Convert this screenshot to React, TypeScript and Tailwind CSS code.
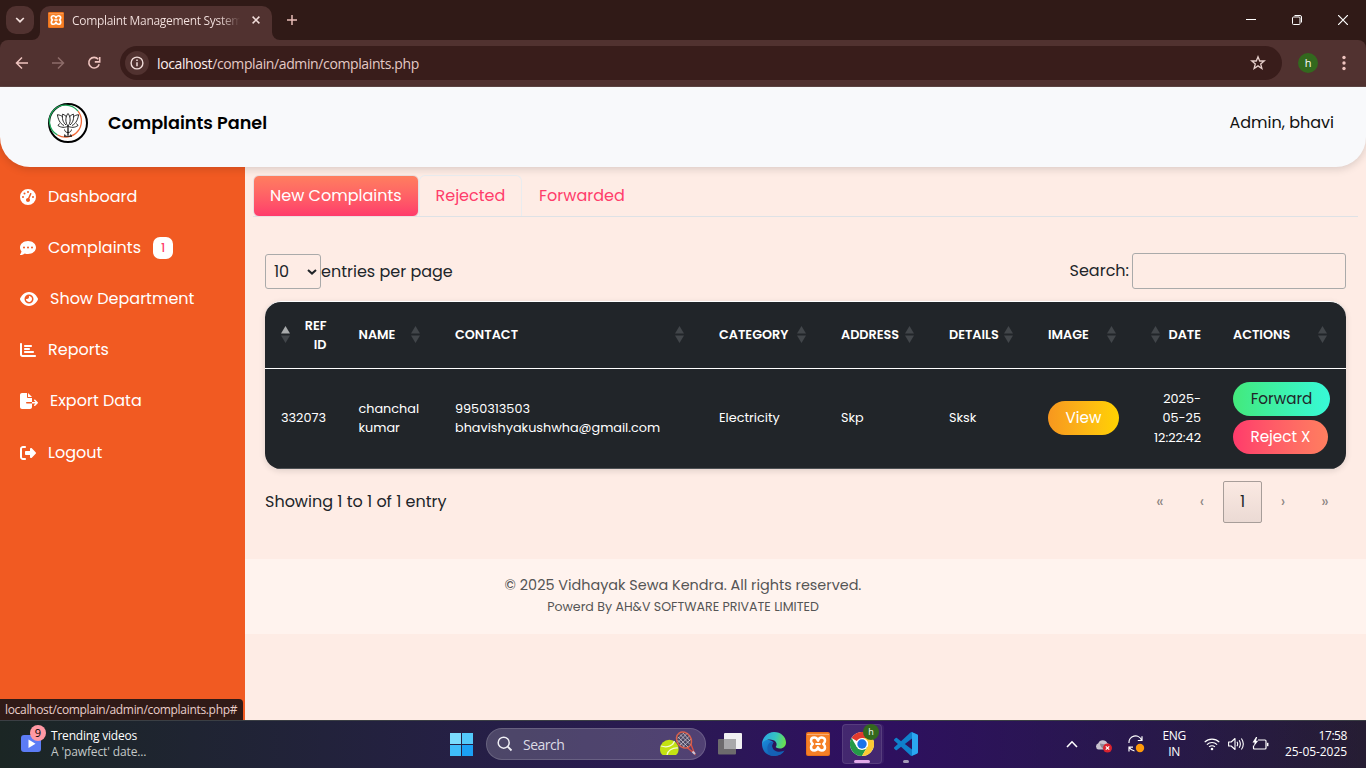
import React from "react";
import {
  FaChartBar,
  FaCommentDots,
  FaEye,
  FaFileExport,
  FaGaugeHigh,
  FaRightFromBracket,
} from "react-icons/fa6";

/* ---------- Shared drawings ---------- */

function XamppIcon({ className }: { className: string }) {
  return (
    <svg viewBox="0 0 24 24" className={className}>
      <rect width="24" height="24" rx="2" fill="#e8701c" />
      <rect x="1" y="1" width="22" height="22" rx="1.5" fill="#f57f26" />
      <path d="M1 2.5h22" stroke="#f9ab72" strokeWidth="1" />
      <path
        d="M12 8.6C11.2 6 9.8 5.600 8.2 5.600C5.600 5.600 5 7.3 5 8.8C5 10.800 6.400 11.2 6.800 12C6.400 12.8 5 13.2 5 15.2C5 16.7 5.600 18.400 8.2 18.400C9.800 18.400 11.2 18 12 15.4C12.800 18 14.2 18.400 15.8 18.400C18.400 18.400 19 16.7 19 15.2C19 13.2 17.6 12.8 17.2 12C17.6 11.2 19 10.800 19 8.8C19 7.3 18.400 5.600 15.8 5.600C14.2 5.600 12.8 6 12 8.6Z"
        fill="none"
        stroke="#fff"
        strokeWidth="2.5"
        strokeLinejoin="round"
      />
      <path d="M10.200 12h3.600" stroke="#fff" strokeWidth="2.2" strokeLinecap="round" />
    </svg>
  );
}

function LotusLogo() {
  return (
    <svg viewBox="0 0 40 40" className="h-10 w-10">
      <circle cx="20" cy="20" r="19" fill="#fff" stroke="#000" strokeWidth="2" />
      <path d="M30 8.200A16 16 0 1 0 9.500 32" fill="none" stroke="#1fa65a" strokeWidth="1.300" />
      <path d="M30 8.200A16 16 0 0 1 9.500 32" fill="none" stroke="#f26b3a" strokeWidth="1.300" />
      <g fill="none" stroke="#111" strokeWidth="0.900" strokeLinejoin="round">
        <path d="M20 23C17.300 20 17 14 20 10.500C23 14 22.700 20 20 23Z" />
        <path d="M18 22C14.500 19 14 15 14.600 11.200C16.800 12 18 13 18.600 14" />
        <path d="M22 22C25.500 19 26 15 25.400 11.200C23.200 12 22 13 21.400 14" />
        <path d="M16 22.500C11.500 20.500 10 15.500 9.400 11.700C11.800 12 13.600 12.800 14.400 13.600" />
        <path d="M24 22.500C28.500 20.500 30 15.500 30.600 11.700C28.200 12 26.400 12.800 25.600 13.600" />
        <path d="M11.500 20.500L10 22.500C13 24.800 17 24.800 20 23.200C23 24.800 27 24.800 30 22.500L28.500 20.500" />
        <path d="M20 23.500v9" strokeWidth="1.300" />
        <path d="M20 29.500C17.500 29.500 16.800 28 16.500 26.500M20 29.500C22.500 29.500 23.200 28 23.500 26.500" />
        <path d="M16 33.200h8M16.500 31.500l1 2M22.500 31.500l1 2" strokeWidth="1.100" />
      </g>
    </svg>
  );
}

/* ---------- Browser chrome ---------- */

function TabStrip() {
  return (
    <div className="flex h-10 shrink-0 items-end bg-[#301a17]">
      <div className="mb-[6px] ml-[6px] flex h-7 w-7 items-center justify-center rounded-[10px] bg-[#513230]">
        <svg viewBox="0 0 10 6" className="h-[6px] w-[10px]">
          <path d="M1.200 1L5 4.700L8.800 1" fill="none" stroke="#f2dedb" strokeWidth="1.700" />
        </svg>
      </div>
      <svg viewBox="0 0 8 8" className="-ml-[2px] h-2 w-2">
        <path d="M8 0v8H0A8 8 0 0 0 8 0Z" fill="#513230" />
      </svg>
      <div className="flex h-[34px] w-[232px] items-center rounded-t-[10px] bg-[#513230] pl-2">
        <XamppIcon className="-mt-[6px] h-4 w-4 shrink-0" />
        <div className="-mt-[4px] ml-2 w-[168px] overflow-hidden whitespace-nowrap bg-linear-to-r from-[#f6e4e1] from-88% to-transparent bg-clip-text text-[12px] tracking-[-0.31px] text-transparent">
          Complaint Management System
        </div>
        <svg viewBox="0 0 8 8" className="-mt-[6px] ml-[12px] h-2 w-2 shrink-0">
          <path d="M.6.6l6.800 6.800M7.400.6L.6 7.400" stroke="#f2dedb" strokeWidth="1.500" />
        </svg>
      </div>
      <svg viewBox="0 0 8 8" className="h-2 w-2">
        <path d="M0 0v8h8A8 8 0 0 1 0 0Z" fill="#513230" />
      </svg>
      <svg viewBox="0 0 10 10" className="mb-[15px] ml-[7px] h-[10px] w-[10px]">
        <path d="M5 0v10M0 5h10" stroke="#e8bdb8" strokeWidth="1.500" />
      </svg>
      <div className="mb-[15px] ml-auto mr-[18px] flex items-center gap-9">
        <svg viewBox="0 0 10 10" className="h-[10px] w-[10px]">
          <path d="M0 4.500h10" stroke="#fff" />
        </svg>
        <svg viewBox="0 0 10 10" className="h-[10px] w-[10px] overflow-visible">
          <rect x=".5" y="2" width="7.500" height="7.500" rx="1" fill="none" stroke="#fff" />
          <path d="M2.500.5h5.500a1.500 1.500 0 0 1 1.500 1.500v5.500" fill="none" stroke="#fff" />
        </svg>
        <svg viewBox="0 0 10 10" className="h-[10px] w-[10px]">
          <path d="M0 0l10 10M10 0L0 10" stroke="#fff" strokeWidth="1.200" />
        </svg>
      </div>
    </div>
  );
}

function Toolbar() {
  return (
    <div className="shrink-0 bg-[#301a17]">
      <div className="flex h-[47px] items-center rounded-t-lg border-b border-[#5f4644] bg-[#513230] pl-[15px] pr-[14px]">
        <svg viewBox="0 0 14 14" className="h-[14px] w-[14px]">
          <path d="M13 7H2M7 1.500L1.500 7L7 12.500" fill="none" stroke="#efc4bf" strokeWidth="1.500" />
        </svg>
        <svg viewBox="0 0 14 14" className="ml-[22px] h-[14px] w-[14px]">
          <path d="M1 7h11M7 1.500L12.500 7L7 12.500" fill="none" stroke="#8d6c69" strokeWidth="1.500" />
        </svg>
        <svg viewBox="0 0 14 14" className="ml-[22px] h-[14px] w-[14px]">
          <path d="M11.200 3.300A5.300 5.300 0 1 0 12.200 8.300" fill="none" stroke="#efc4bf" strokeWidth="1.600" />
          <path d="M12.700 1v4.900H7.800" fill="none" stroke="#efc4bf" strokeWidth="1.600" />
        </svg>
        <div className="ml-[19px] flex h-[34px] w-[1162px] items-center rounded-full bg-[#391d1b] pl-[5px] pr-4">
          <div className="flex h-6 w-6 items-center justify-center rounded-full bg-[#513230]">
            <svg viewBox="0 0 14 14" className="h-[14px] w-[14px]">
              <circle cx="7" cy="7" r="5.900" fill="none" stroke="#f0dcd9" strokeWidth="1.400" />
              <path d="M7 6.200v4M7 3.500v1.500" stroke="#f0dcd9" strokeWidth="1.500" />
            </svg>
          </div>
          <div className="ml-[8px] text-[14px] tracking-[-0.38px] text-[#e4c9c5]">
            <span className="text-[#fbeeec]">localhost</span>/complain/admin/complaints.php
          </div>
          <svg viewBox="0 0 16 16" className="ml-auto h-4 w-4">
            <path
              d="M8 1.800L9.700 6H14.200L10.700 8.900L11.900 13.500L8 10.900L4.100 13.500L5.300 8.900L1.800 6H6.300Z"
              fill="none"
              stroke="#e6cfcb"
              strokeWidth="1.300"
            />
          </svg>
        </div>
        <div className="ml-4 flex h-5 w-5 items-center justify-center rounded-full bg-[#33691e] text-[11px] text-white">
          h
        </div>
        <svg viewBox="0 0 16 16" className="ml-auto h-4 w-4">
          <g fill="#efc4bf">
            <circle cx="8" cy="2.500" r="1.700" />
            <circle cx="8" cy="8" r="1.700" />
            <circle cx="8" cy="13.500" r="1.700" />
          </g>
        </svg>
      </div>
    </div>
  );
}

/* ---------- Page ---------- */

function PageHeader() {
  return (
    <header className="relative z-10 flex h-20 shrink-0 items-start rounded-b-[30px] bg-[#f8f9fb] pl-12 pr-8 pt-4 shadow-[0_2px_8px_rgba(0,0,0,0.15)]">
      <LotusLogo />
      <h1 className="ml-5 mt-[6px] text-[17.6px] leading-7 font-semibold text-black">Complaints Panel</h1>
      <div className="ml-auto mt-2 text-base leading-6 text-[#111]">Admin, bhavi</div>
    </header>
  );
}

function Sidebar() {
  const row = "flex h-[51.2px] items-center pl-5";
  return (
    <aside className="w-[245px] shrink-0 bg-[#f15a22] pt-[34px] text-base text-white">
      <div className={row}>
        <FaGaugeHigh className="mr-3 h-4 w-4" />
        <span>Dashboard</span>
      </div>
      <div className={row}>
        <FaCommentDots className="mr-3 h-4 w-4" />
        <span>Complaints</span>
        <span className="ml-3 flex h-[22px] w-5 items-center justify-center rounded-[7px] bg-white text-[12px] font-medium text-[#ff3d6b]">
          1
        </span>
      </div>
      <div className={row}>
        <FaEye className="mr-3 h-4 w-[18px]" />
        <span>Show Department</span>
      </div>
      <div className={row}>
        <FaChartBar className="mr-3 h-4 w-4" />
        <span>Reports</span>
      </div>
      <div className={row}>
        <FaFileExport className="mr-3 h-4 w-[18px]" />
        <span>Export Data</span>
      </div>
      <div className={row}>
        <FaRightFromBracket className="mr-3 h-4 w-4" />
        <span>Logout</span>
      </div>
    </aside>
  );
}

function Tabs() {
  return (
    <nav className="mx-2 flex h-[42px] items-start border-b border-[#dee2e6] text-base text-[#ff3d6b]">
      <div className="flex h-[42px] w-[166px] shrink-0 items-center rounded-md border border-[#eadfe0] bg-linear-to-b from-[#ff7e5f] to-[#ff3a6b] pl-4 whitespace-nowrap text-white">
        New Complaints
      </div>
      <div className="flex h-[41px] w-[103px] items-center rounded-t-md border border-b-0 border-[#e9ecef] pl-[15.5px]">
        Rejected
      </div>
      <div className="flex h-[41px] items-center pl-[17px]">Forwarded</div>
    </nav>
  );
}

function SortArrows({ ascending = false }: { ascending?: boolean }) {
  return (
    <svg viewBox="0 0 9 17" className="h-[17px] w-[9px] shrink-0">
      <path d="M4.500 0L9 7.500H0Z" fill={ascending ? "#a9abac" : "#42464a"} />
      <path d="M4.500 17L9 9.500H0Z" fill="#42464a" />
    </svg>
  );
}

const columns = [
  { label: "NAME", width: "w-[96.5px]" },
  { label: "CONTACT", width: "w-[264px]" },
  { label: "CATEGORY", width: "w-[122px]" },
  { label: "ADDRESS", width: "w-[108px]" },
  { label: "DETAILS", width: "w-[99px]" },
  { label: "IMAGE", width: "w-[103px]" },
];

function ComplaintsTable() {
  return (
    <div className="mt-3 overflow-hidden rounded-2xl border-t border-white bg-[#212529] shadow-[0_2px_6px_rgba(0,0,0,0.12)]">
      <table className="w-full table-fixed border-collapse text-[12.8px] leading-[19.2px] text-white">
        <thead>
          <tr className="h-[66px] border-b border-white text-left">
            <th className="w-[77.5px] p-0">
              <div className="flex items-center justify-between px-4 text-right font-semibold">
                <SortArrows ascending />
                <span className="w-7">REF ID</span>
              </div>
            </th>
            {columns.map((c) => (
              <th key={c.label} className={`${c.width} p-0`}>
                <div className="flex items-center justify-between pl-4 pr-[19px] font-semibold">
                  {c.label}
                  <SortArrows />
                </div>
              </th>
            ))}
            <th className="w-[82px] p-0">
              <div className="flex items-center justify-between px-4 font-semibold">
                <SortArrows />
                DATE
              </div>
            </th>
            <th className="w-[129px] p-0">
              <div className="flex items-center justify-between pl-4 pr-[19px] font-semibold">
                ACTIONS
                <SortArrows />
              </div>
            </th>
          </tr>
        </thead>
        <tbody>
          <tr className="h-[100px] border-b border-[#4d5154]">
            <td className="py-0 pl-4 pr-0">332073</td>
            <td className="py-0 pl-4 pr-0">
              chanchal
              <br />
              kumar
            </td>
            <td className="py-0 pl-4 pr-0">
              9950313503
              <br />
              bhavishyakushwha@gmail.com
            </td>
            <td className="py-0 pl-4 pr-0">Electricity</td>
            <td className="py-0 pl-4 pr-0">Skp</td>
            <td className="py-0 pl-4 pr-0">Sksk</td>
            <td className="py-0 pl-4 pr-0">
              <button className="flex h-[34px] w-[71px] items-center justify-center rounded-full bg-linear-to-r from-[#f7971e] to-[#ffd200] text-[15.2px]">
                View
              </button>
            </td>
            <td className="py-0 pl-0 pr-4 text-right">
              2025-
              <br />
              05-25
              <br />
              12:22:42
            </td>
            <td className="py-0 pl-4 pr-0">
              <div className="flex flex-col gap-1 text-[15.2px]">
                <button className="flex h-[34px] w-[97px] items-center justify-center rounded-full bg-linear-to-r from-[#43e97b] to-[#38f9d7] text-[#212529]">
                  Forward
                </button>
                <button className="flex h-[34px] w-[95px] items-center justify-center rounded-full bg-linear-to-r from-[#ff3a6b] to-[#ff7e5f]">
                  Reject X
                </button>
              </div>
            </td>
          </tr>
        </tbody>
      </table>
    </div>
  );
}

function Content() {
  return (
    <main className="flex flex-1 flex-col bg-[#feece5] pt-[38px] text-base text-[#212529]">
      <Tabs />
      <section className="ml-5 mr-5 mt-9 h-[306px]">
        <div className="flex h-9 items-center">
          <div className="mt-px flex h-[35px] w-14 items-center justify-between rounded-[3px] border border-[#aaa] pl-2 pr-[3px]">
            <span>10</span>
            <svg viewBox="0 0 10 6" className="h-[6px] w-[10px]">
              <path d="M1 1L5 4.600L9 1" fill="none" stroke="#212529" strokeWidth="2" />
            </svg>
          </div>
          <span className="mt-px">entries per page</span>
          <span className="ml-auto">Search:</span>
          <input type="text" className="ml-[3px] h-9 w-[214px] rounded-[3px] border border-[#aaa]" />
        </div>
        <ComplaintsTable />
        <div className="mt-3 flex h-[42px] items-center">
          <span>Showing 1 to 1 of 1 entry</span>
          <div className="ml-auto flex h-full items-center text-center text-[#8b8482]">
            <span className="w-[42px]">«</span>
            <span className="w-[42px]">‹</span>
            <span className="flex h-[42px] w-[39px] items-center justify-center rounded-[2px] border border-[#a79d99] bg-linear-to-b from-[#fbe9e2] to-[#ebdad4] text-[#212529]">
              1
            </span>
            <span className="w-[42px]">›</span>
            <span className="w-[42px]">»</span>
          </div>
        </div>
      </section>
      <footer className="h-[75px] bg-[#fff3ee] pr-[245px] pt-[15px] text-center text-[#555]">
        <p className="text-[14.4px] leading-[22px]">© 2025 Vidhayak Sewa Kendra. All rights reserved.</p>
        <p className="text-[12.6px] leading-[22px]">Powerd By AH&amp;V SOFTWARE PRIVATE LIMITED</p>
      </footer>
    </main>
  );
}

/* ---------- Taskbar ---------- */

function SportsArt() {
  return (
    <svg viewBox="0 0 40 28" className="h-7 w-10">
      <path d="M25 15L35.500 23.500L30 9" fill="none" stroke="#d94f43" strokeWidth="1.400" />
      <path d="M33.500 21.500l2.500 2.500" stroke="#c9c4d6" strokeWidth="2" />
      <ellipse cx="25" cy="10" rx="7" ry="8.500" transform="rotate(-35 25 10)" fill="#4a4560" stroke="#d9604d" strokeWidth="1.500" />
      <g stroke="#d8d3de" strokeWidth=".7">
        <path d="M19 7l10 10M21 4.500l10 10M24 3l7 8M18.500 10l7 7M19 12.500l9-9M21 15l9.500-9M24 16.500l7.500-7M19 8.500l5-5" />
      </g>
      <path d="M1 19a9.300 9.300 0 0 1 18.600 0c0 3-1 5-2.600 6H3.600C2 24 1 22 1 19Z" fill="#c3e212" />
      <path d="M2 16c6 2 12 0 13.500-5M8 25c.5-4 5-7.500 11-7" fill="none" stroke="#f3fbd0" strokeWidth="1.200" />
    </svg>
  );
}

function EdgeIcon() {
  return (
    <svg viewBox="0 0 24 24" className="h-6 w-6">
      <defs>
        <linearGradient id="edgeTop" x1="0" y1=".3" x2="1" y2=".5">
          <stop offset="0" stopColor="#2aa5e6" />
          <stop offset=".55" stopColor="#35c5c0" />
          <stop offset="1" stopColor="#6be04e" />
        </linearGradient>
        <linearGradient id="edgeLow" x1="0" y1="0" x2="1" y2="1">
          <stop offset="0" stopColor="#1b8bdc" />
          <stop offset="1" stopColor="#0d4f9e" />
        </linearGradient>
      </defs>
      <path d="M0 12C0 17 3 24 12 24C17 24 21 21.500 22.500 18.500C19 20.500 11 20.500 10 14.500C9.700 12.500 11 11 11.500 10.500C9 7 0 6.500 0 12Z" fill="url(#edgeLow)" />
      <path d="M9 23.600C5.500 21.500 4 15 7 11.500C8.500 10 10.500 9.800 11.500 10.500C9 13 9.500 20 17 20.300C19.500 20.400 21.500 19.500 22.500 18.500C20 22.800 15 24.800 9 23.600Z" fill="#1560b5" />
      <path d="M0 12C.5 5 5.500 0 12 0C19 0 24 5 24 10.500C24 14 21.500 16.500 18 16.500C15 16.500 13.500 15.500 13.800 14.800C15.500 13 15 8 8.500 7.500C4 7.200.8 9.500 0 12Z" fill="url(#edgeTop)" />
    </svg>
  );
}

function ChromeIcon() {
  return (
    <svg viewBox="0 0 24 24" className="h-6 w-6">
      <circle cx="12" cy="12" r="12" fill="#fff" />
      <path d="M12 12L1.600 6A12 12 0 0 1 22.400 6H12Z" fill="#e33b2e" />
      <path d="M1.600 6A12 12 0 0 0 12 24L17.200 15L12 12L6.800 15Z" fill="#249a48" />
      <path d="M22.400 6A12 12 0 0 1 12 24L17.200 15A6 6 0 0 0 17 8.500L12 6Z" fill="#fcc934" />
      <circle cx="12" cy="12" r="6" fill="#fff" />
      <circle cx="12" cy="12" r="4.700" fill="#1a73e8" />
    </svg>
  );
}

function CodeIcon() {
  return (
    <svg viewBox="0 0 24 24" className="h-6 w-6">
      <path
        d="M23.150 2.587L18.210.21a1.494 1.494 0 0 0-1.705.29l-9.460 8.630-4.120-3.128a.999.999 0 0 0-1.276.057L.327 7.261A1 1 0 0 0 .326 8.740L3.899 12 .326 15.260a1 1 0 0 0 .001 1.479L1.650 17.940a.999.999 0 0 0 1.276.057l4.120-3.128 9.460 8.630a1.492 1.492 0 0 0 1.704.290l4.942-2.377A1.500 1.500 0 0 0 24 20.060V3.939a1.500 1.500 0 0 0-.850-1.352zm-5.146 14.861L10.826 12l7.178-5.448v10.896z"
        fill="#0f80cc"
      />
      <path d="M18 .2L23.200 2.600Q24 3 24 4V20Q24 21 23.200 21.400L18 23.800Z" fill="#2aa7f0" />
    </svg>
  );
}

function Taskbar() {
  return (
    <div className="flex h-12 shrink-0 items-center border-t border-[#3b3f44] bg-linear-to-r from-[#1b2422] via-[#16244f] via-38% to-[#261d33]">
      <div className="flex h-full w-full items-center bg-linear-to-r from-[#1b2624] from-0% via-[#2f0f60] via-63% to-[#251d32]/0 pb-px">
        <div className="flex w-[450px] items-center pl-[21px]">
          <div className="relative h-5 w-5">
            <svg viewBox="0 0 20 18" className="mt-px h-[18px] w-5">
              <rect width="20" height="17" rx="3" fill="#5c7cf5" />
              <path d="M7.500 4.500v8.500l7-4.200z" fill="#fff" />
            </svg>
            <span className="absolute -top-[9px] left-[9px] flex h-4 w-4 items-center justify-center rounded-full bg-[#ff99a4] text-[11px] text-black">
              9
            </span>
          </div>
          <div className="ml-[10px] text-[12px] leading-4">
            <div className="tracking-[-0.2px] text-white">Trending videos</div>
            <div className="tracking-[-0.12px] text-[#c3c8c7]">A 'pawfect' date...</div>
          </div>
        </div>
        <div className="grid h-[23px] w-[23px] grid-cols-2 gap-px">
          <span className="bg-[#7bdcfd]" />
          <span className="bg-[#53c9fb]" />
          <span className="bg-[#3fbdfa]" />
          <span className="bg-[#1ba0f5]" />
        </div>
        <div className="ml-[13px] flex h-8 w-[220px] items-center rounded-full border border-white/15 bg-white/18 pl-[10px] pr-[6px]">
          <svg viewBox="0 0 16 16" className="h-4 w-4">
            <circle cx="6.700" cy="6.700" r="5.500" fill="none" stroke="#f0eff5" strokeWidth="1.500" />
            <path d="M10.700 10.700L14.500 14.500" stroke="#f0eff5" strokeWidth="1.800" />
          </svg>
          <span className="ml-[10px] text-[14px] tracking-[-0.5px] text-[#dcdbe6]">Search</span>
          <div className="ml-auto">
            <SportsArt />
          </div>
        </div>
        <svg viewBox="0 0 24 22" className="ml-3 h-[22px] w-6">
          <rect x="6" y="0" width="18" height="16" rx="1" fill="#f0f0f2" />
          <rect x="0" y="6" width="18" height="15.500" rx="1" fill="#6d6b6d" />
          <rect x="6" y="6" width="12" height="10" fill="#a8a8aa" />
        </svg>
        <div className="ml-5">
          <EdgeIcon />
        </div>
        <XamppIcon className="ml-5 h-6 w-6" />
        <div className="relative ml-3 flex h-10 w-10 items-center justify-center rounded-[4px] border border-white/10 bg-white/10 shadow-[2px_0_0_rgba(255,255,255,0.05)]">
          <ChromeIcon />
          <span className="absolute -top-px left-[20px] flex h-4 w-4 items-center justify-center rounded-full bg-[#33691e] text-[9px] text-white">
            h
          </span>
          <span className="absolute bottom-0 left-[11px] h-[3px] w-4 rounded-full bg-[#e2a9ea]" />
        </div>
        <div className="relative ml-3">
          <CodeIcon />
          <span className="absolute -bottom-[7px] left-[9px] h-[3px] w-[6px] rounded-full bg-[#a49bb8]" />
        </div>
        <div className="ml-auto flex items-center pr-[19px] text-[12px] leading-4 text-white">
          <svg viewBox="0 0 12 8" className="h-2 w-3">
            <path d="M1 7L6 1.800L11 7" fill="none" stroke="#fff" strokeWidth="1.600" />
          </svg>
          <svg viewBox="0 0 18 14" className="ml-[17px] mt-1 h-[14px] w-[18px]">
            <path d="M3.500 10.500A3.200 3.200 0 0 1 3.300 4.300A4.800 4.800 0 0 1 12.200 4Q14 4.500 14.500 7L10 10.500Z" fill="#c9c2cf" />
            <path d="M5 4.500L13.500 6L9 10.500Q5 8 5 4.500Z" fill="#8f8897" />
            <circle cx="12.500" cy="9" r="4.500" fill="#d9232e" />
            <path d="M10.800 7.300l3.400 3.400M14.200 7.300l-3.400 3.400" stroke="#fff" strokeWidth="1.200" />
          </svg>
          <svg viewBox="0 0 18 18" className="ml-[14px] h-[18px] w-[18px]">
            <path d="M2 8A6.500 6.500 0 0 1 14.500 5M15 1.200V5.500H10.800" fill="none" stroke="#fff" strokeWidth="1.200" />
            <path d="M2 16.500V12.200H6M2.300 12.500Q4 15.500 7.500 16" fill="none" stroke="#fff" strokeWidth="1.200" />
            <circle cx="13" cy="13" r="4.200" fill="#ff9a0a" />
          </svg>
          <div className="ml-[17px] text-center tracking-[-0.3px]">
            ENG
            <br />
            IN
          </div>
          <svg viewBox="0 0 16 14" className="ml-[18px] h-[14px] w-4">
            <g fill="none" stroke="#fff" strokeWidth="1.200">
              <path d="M.7 5.200A10.300 10.300 0 0 1 15.300 5.200" />
              <path d="M2.900 7.600A7.200 7.200 0 0 1 13.100 7.600" />
              <path d="M5.100 9.900A4.200 4.200 0 0 1 10.900 9.900" />
            </g>
            <circle cx="8" cy="12" r="1.300" fill="#fff" />
          </svg>
          <svg viewBox="0 0 17 14" className="ml-2 h-[14px] w-[17px]">
            <g fill="none" stroke="#fff" strokeWidth="1.100">
              <path d="M.6 5h2.600L7 1.500v11L3.200 9H.6Z" strokeLinejoin="round" />
              <path d="M9 4.800Q10.300 7 9 9.200M11.200 3.200Q13.500 7 11.200 10.800M13.400 1.500Q17.200 7 13.400 12.500" />
            </g>
          </svg>
          <svg viewBox="0 0 17 14" className="ml-[7px] h-[14px] w-[17px]">
            <path d="M6 3H13Q14 3 14 4V11Q14 12 13 12H2.500Q1.500 12 1.500 11V8.500" fill="none" stroke="#fff" strokeWidth="1.200" />
            <path d="M15.700 5.800v3.400" stroke="#fff" strokeWidth="1.500" />
            <path d="M4 0L.5 5.500H2.700L1.800 9.500L6.200 3.800H4L5.200 0Z" fill="#fff" />
          </svg>
          <div className="ml-4 text-right">
            <div className="tracking-[-0.42px]">17:58</div>
            <div className="tracking-[-0.06px]">25-05-2025</div>
          </div>
        </div>
      </div>
    </div>
  );
}

export default function App() {
  return (
    <div className="flex h-[768px] w-[1366px] flex-col overflow-hidden font-['Open_Sans','Noto_Sans',sans-serif]">
      <TabStrip />
      <Toolbar />
      <div className="relative flex h-[633px] shrink-0 flex-col font-[Poppins,Inter,sans-serif]">
        <PageHeader />
        <div className="-mt-[30px] flex flex-1">
          <Sidebar />
          <Content />
        </div>
        <div className="absolute bottom-0 left-0 z-20 flex h-[21px] w-[243px] items-center rounded-tr-[4px] bg-[#301a17] pl-[5px] font-['Open_Sans','Noto_Sans',sans-serif] text-[12px] tracking-[-0.32px] whitespace-nowrap text-[#e9cfcb]">
          localhost/complain/admin/complaints.php#
        </div>
      </div>
      <Taskbar />
    </div>
  );
}
